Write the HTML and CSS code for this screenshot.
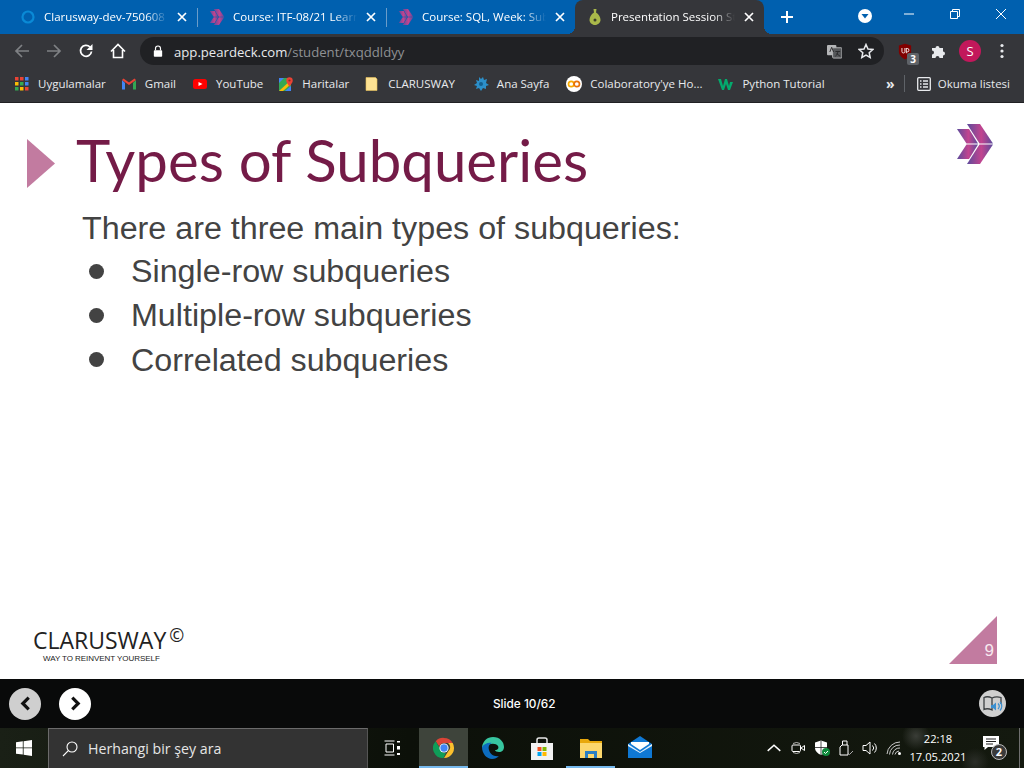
FILE: index.html
```html
<!DOCTYPE html>
<html lang="en">
<head>
    <meta charset="UTF-8">
    <title>Presentation Session Student</title>
    <link rel="stylesheet" href="styles.css">
</head>
<body>
    <svg class="defs" width="0" height="0">
        <defs>
            <linearGradient id="chev" x1="0" y1="0" x2="1" y2="0">
                <stop offset="0" stop-color="#5c4b9c"/>
                <stop offset="0.55" stop-color="#c2448f"/>
                <stop offset="1" stop-color="#5c4b9c"/>
            </linearGradient>
            <symbol id="chevrons" viewBox="0 0 36 40">
                <path d="M0 5h12l9 14.500H9.500z" fill="url(#chev)"/>
                <path d="M9.500 20.500H21L12 35H0z" fill="url(#chev)"/>
                <path d="M10 0h13l13 19.500H22.500z" fill="url(#chev)"/>
                <path d="M22.500 20.500H36L23 40H10z" fill="url(#chev)"/>
            </symbol>
            <symbol id="x" viewBox="0 0 10 10">
                <path d="M1 1l8 8M9 1l-8 8" stroke="#fff" stroke-width="1.700" fill="none"/>
            </symbol>
        </defs>
    </svg>

    <!-- tab strip -->
    <div class="tabstrip">
        <div class="tab">
            <svg class="fav" viewBox="0 0 16 16"><circle cx="8" cy="8" r="5.500" fill="none" stroke="#0a8ad6" stroke-width="2.200"/></svg>
            <span class="tab-title">Clarusway-dev-750608</span>
            <svg class="tab-x"><use href="#x"/></svg>
        </div>
        <div class="tab">
            <svg class="fav"><use href="#chevrons"/></svg>
            <span class="tab-title">Course: ITF-08/21 Learn</span>
            <svg class="tab-x"><use href="#x"/></svg>
        </div>
        <div class="tab">
            <svg class="fav"><use href="#chevrons"/></svg>
            <span class="tab-title">Course: SQL, Week: Sub</span>
            <svg class="tab-x"><use href="#x"/></svg>
        </div>
        <div class="tab active">
            <svg class="fav" viewBox="0 0 16 16">
                <path d="M6.500 0h3l-.5 3.500c3 1.500 4.500 5 4.500 7.500S11 16 8 16s-5.500-2.500-5.500-5S4 5 7 3.500z" fill="#a9b84a"/>
                <circle cx="8" cy="11" r="1.500" fill="#3c3f2a"/>
            </svg>
            <span class="tab-title">Presentation Session St</span>
            <svg class="tab-x"><use href="#x"/></svg>
        </div>
        <svg class="newtab" viewBox="0 0 12 12"><path d="M6 0v12M0 6h12" stroke="#fff" stroke-width="2"/></svg>
        <div class="strip-menu">
            <svg viewBox="0 0 14 14"><circle cx="7" cy="7" r="7" fill="#fff"/><path d="M3.500 5h7L7 9.500z" fill="#0060af"/></svg>
        </div>
        <div class="winbtns">
            <svg viewBox="0 0 12 12"><path d="M1 6h10" stroke="#fff" fill="none"/></svg>
            <svg viewBox="0 0 12 12"><path d="M1.500 3.500h7v7h-7zM3.500 3.500v-2h7v7h-2" stroke="#fff" fill="none"/></svg>
            <svg viewBox="0 0 12 12"><path d="M1 1l10 10M11 1L1 11" stroke="#fff" fill="none"/></svg>
        </div>
    </div>

    <!-- address bar -->
    <div class="toolbar">
        <svg class="tool" viewBox="0 0 16 16"><path d="M15 8H2M8 2L2 8l6 6" fill="none" stroke="#7f8184" stroke-width="1.700"/></svg>
        <svg class="tool" viewBox="0 0 16 16"><path d="M1 8h13M8 2l6 6-6 6" fill="none" stroke="#7f8184" stroke-width="1.700"/></svg>
        <svg class="tool" viewBox="0 0 16 16"><path d="M13.500 8.500A5.500 5.500 0 1 1 12 4" fill="none" stroke="#fff" stroke-width="1.800"/><path d="M14.500 1v6h-6z" fill="#fff"/></svg>
        <svg class="tool" viewBox="0 0 16 16"><path d="M1 8.500L8 1.500l7 7M3.500 7v7.500h9V7" fill="none" stroke="#fff" stroke-width="1.600"/></svg>
        <div class="omnibox">
            <svg class="lock" viewBox="0 0 12 14"><path d="M3 6V4a3 3 0 0 1 6 0v2" fill="none" stroke="#fff" stroke-width="1.400"/><rect x="1" y="6" width="10" height="8" rx="1" fill="#fff"/></svg>
            <span class="url">app.peardeck.com<span class="url-path">/student/txqddldyy</span></span>
            <svg class="omni-translate" viewBox="0 0 16 16"><rect x="0" y="1" width="10" height="11" rx="1" fill="#b5b6b8"/><rect x="6" y="4" width="10" height="11" rx="1" fill="#55575a" stroke="#b5b6b8"/><path d="M3 8.500l2-5 2 5M9 8h5M11.500 8c0 2-1 4-2.500 5M10.500 10c.8 1.300 2 2.400 3.500 3" fill="none" stroke="#27282a"/></svg>
            <svg class="omni-star" viewBox="0 0 16 16"><path d="M8 1.500l2 4.500 4.800.5-3.600 3.200 1 4.800L8 12.100l-4.200 2.400 1-4.800L1.200 6.500 6 6z" fill="none" stroke="#e8eaed" stroke-width="1.500"/></svg>
        </div>
        <div class="ext-ublock">
            <svg viewBox="0 0 16 18"><path d="M8 0l7 2v7c0 4-3 7-7 9-4-2-7-5-7-9V2z" fill="#800000"/><path d="M4.500 5v4a1.700 1.700 0 0 0 3.400 0V5M9.500 5v6M9.500 5.500h1a2 2 0 0 1 0 4h-1" fill="none" stroke="#f2e6e6" stroke-width="1.100"/></svg>
            <span class="ext-badge">3</span>
        </div>
        <svg class="ext-puzzle" viewBox="0 0 16 16"><path d="M1 5h3.500a2 2 0 1 1 4 0H12v3.500a2 2 0 1 1 0 4V15H8.500a2 2 0 1 0-4 0H1v-3.500a2 2 0 1 0 0-4z" fill="#e8eaed"/></svg>
        <div class="avatar">S</div>
        <svg class="dots" viewBox="0 0 4 16"><circle cx="2" cy="2.500" r="1.600" fill="#e8eaed"/><circle cx="2" cy="8" r="1.600" fill="#e8eaed"/><circle cx="2" cy="13.500" r="1.600" fill="#e8eaed"/></svg>
    </div>

    <!-- bookmarks -->
    <div class="bookmarks">
        <div class="bm bm-apps">
            <svg viewBox="0 0 14 14">
                <path d="M0 0h3.500v3.500H0z" fill="#ea4335"/><path d="M5 0h3.500v3.500H5z" fill="#ea4335"/><path d="M10 0h3.500v3.500H10z" fill="#4285f4"/>
                <path d="M0 5h3.500v3.500H0z" fill="#fbbc05"/><path d="M5 5h3.500v3.500H5z" fill="#34a853"/><path d="M10 5h3.500v3.500H10z" fill="#4285f4"/>
                <path d="M0 10h3.500v3.500H0z" fill="#34a853"/><path d="M5 10h3.500v3.500H5z" fill="#fbbc05"/><path d="M10 10h3.500v3.500H10z" fill="#ea4335"/>
            </svg>
            Uygulamalar
        </div>
        <div class="bm bm-gmail">
            <svg viewBox="0 0 14 12"><path d="M0 2v9.500h3V5z" fill="#4285f4"/><path d="M11 5v6.500h3V2z" fill="#34a853"/><path d="M0 2l7 5 7-5-1.500-1.500L7 4.500 1.500.5z" fill="#ea4335"/></svg>
            Gmail
        </div>
        <div class="bm bm-yt">
            <svg viewBox="0 0 14 10"><rect width="14" height="10" rx="2.500" fill="#f00"/><path d="M5.500 3l4 2-4 2z" fill="#fff"/></svg>
            YouTube
        </div>
        <div class="bm bm-maps">
            <svg viewBox="0 0 14 14"><path d="M0 1h12v13H0z" fill="#34a853"/><path d="M0 14L12 3v4L4 14z" fill="#fbbc05"/><path d="M0 1h5L0 6z" fill="#4285f4"/><path d="M6 14l6-5v5z" fill="#4285f4"/><circle cx="10.500" cy="3.500" r="3.200" fill="#ea4335"/><path d="M8 5.500h5L10.500 10z" fill="#ea4335"/><circle cx="10.500" cy="3.500" r="1.100" fill="#8f2a22"/></svg>
            Haritalar
        </div>
        <div class="bm bm-folder">
            <svg viewBox="0 0 12 14"><path d="M0 .500h9.500l1.500 1.500v11.500H0z" fill="#fde293" stroke="#e9c25b" stroke-width=".600"/></svg>
            CLARUSWAY
        </div>
        <div class="bm bm-ana wide-ic">
            <svg viewBox="0 0 16 16"><path d="M6 1l2 2 2-2 1 3 3-1-1 4 3 2-3 1v3l-3-1-2 3-2-3-3 1 1-3-3-1 3-2-1-3 3 1z" fill="#2c8fc9"/><circle cx="8" cy="8" r="2" fill="#145f8e"/></svg>
            Ana Sayfa
        </div>
        <div class="bm bm-colab wide-ic">
            <svg viewBox="0 0 16 16"><circle cx="8" cy="8" r="8" fill="#fff"/><circle cx="5.200" cy="8" r="2.700" fill="none" stroke="#f9ab00" stroke-width="1.700"/><circle cx="10.800" cy="8" r="2.700" fill="none" stroke="#e8710a" stroke-width="1.700"/></svg>
            Colaboratory'ye Ho...
        </div>
        <div class="bm bm-w3 wide-ic">
            <svg viewBox="0 0 16 12"><path d="M0 1h3l2 7 2-7h2l2 7 1-4h3l-3 8h-2L8 6l-2 6H4z" fill="#04aa6d"/></svg>
            Python Tutorial
        </div>
        <span class="bm-more">»</span>
        <span class="bm-sep"></span>
        <div class="bm bm-read">
            <svg viewBox="0 0 14 14"><rect x=".700" y=".700" width="12.600" height="12.600" rx="1" fill="none" stroke="#e8eaed" stroke-width="1.300"/><path d="M3 4h1.500M6 4h5M3 7h1.500M6 7h5M3 10h1.500M6 10h5" stroke="#e8eaed" stroke-width="1.300"/></svg>
            Okuma listesi
        </div>
    </div>

    <!-- slide -->
    <main class="slide">
        <header class="slide-head">
            <span class="head-mark"></span>
            <h1>Types of Subqueries</h1>
            <svg class="head-logo"><use href="#chevrons"/></svg>
        </header>
        <section class="slide-body">
            <p>There are three main types of subqueries:</p>
            <ul>
                <li>Single-row subqueries</li>
                <li>Multiple-row subqueries</li>
                <li>Correlated subqueries</li>
            </ul>
        </section>
        <footer class="slide-foot">
            <div class="brand">
                <div class="brand-name">CLARUSWAY<sup>©</sup></div>
                <div class="brand-tag">WAY TO REINVENT YOURSELF</div>
            </div>
            <div class="page-no"><span>9</span></div>
        </footer>
    </main>

    <!-- deck controls -->
    <div class="deckbar">
        <div class="deck-nav">
            <button class="nav-btn prev"><svg viewBox="0 0 10 14"><path d="M8 1.500L2.500 7 8 12.500" fill="none" stroke="#111" stroke-width="3"/></svg></button>
            <button class="nav-btn next"><svg viewBox="0 0 10 14"><path d="M2 1.500L7.500 7 2 12.500" fill="none" stroke="#111" stroke-width="3"/></svg></button>
        </div>
        <div class="deck-count">Slide 10/62</div>
        <div class="deck-read">
            <svg viewBox="0 0 20 18"><path d="M1 2.500c2-1 5-1 8 .5v12c-3-1.500-6-1.500-8-.5zM9 3c3-1.500 6-1.500 9-.5V9" fill="none" stroke="#3c4043" stroke-width="1.300"/><path d="M8 10h2l3-2.500v8L10 13H8z" fill="#3a8fd0"/><path d="M15 8.500a4 4 0 0 1 0 5.500M17 7a6 6 0 0 1 0 8.500" fill="none" stroke="#3a8fd0" stroke-width="1.200"/></svg>
        </div>
    </div>

    <!-- windows taskbar -->
    <div class="taskbar">
        <div class="start">
            <svg viewBox="0 0 16 16"><path d="M0 2.300l6.800-1v6.200H0zM7.600 1.200L16 0v7.500H7.600zM0 8.300h6.800v6.300L0 13.700zM7.600 8.300H16V16l-8.400-1.200z" fill="#fff"/></svg>
        </div>
        <div class="search">
            <svg viewBox="0 0 16 16"><circle cx="10" cy="6" r="5" fill="none" stroke="#fff" stroke-width="1.100"/><path d="M6.300 9.700L1 15" stroke="#fff" stroke-width="1.100"/></svg>
            <span>Herhangi bir şey ara</span>
        </div>
        <div class="task task-view">
            <svg viewBox="0 0 16 16"><path d="M.500 1h10M.500 15h10M2 4h7.500v8H2z" fill="none" stroke="#fff"/><path d="M13 1h3v1.500h-3zM13 6h3v3.500h-3zM13 13h3v2h-3z" fill="#fff"/></svg>
        </div>
        <div class="task task-open task-focus">
            <svg viewBox="0 0 24 24">
                <path d="M12 1a11 11 0 0 1 9.500 5.500H12a5.500 5.500 0 0 0-5.200 3.800L3 4.500A11 11 0 0 1 12 1z" fill="#db4437"/>
                <path d="M21.500 6.500A11 11 0 0 1 12 23l5-8a5.500 5.500 0 0 0-.6-8.500z" fill="#fbc02d"/>
                <path d="M3 4.500l4.700 8.200A5.500 5.500 0 0 0 14 17.200L11.500 23A11 11 0 0 1 3 4.500z" fill="#0f9d58"/>
                <circle cx="12" cy="12" r="5" fill="#fff"/><circle cx="12" cy="12" r="4" fill="#4285f4"/>
            </svg>
        </div>
        <div class="task">
            <svg viewBox="0 0 24 24">
                <path d="M1 11C2 5 6 1 12 1c7 0 11 5 11 10 0 3-2 5-5 5-2 0-4-1-4-2 3 0 4-2 3-4-2-3-8-3-11 0-2 1-4 2-5 1z" fill="#37c6a0"/>
                <path d="M1 11c2-3 6-5 10-4-3 1-4 4-3 7 1 4 5 7 10 6-2 2-4 3-7 3C6 23 1 18 1 11z" fill="#0c6cbf"/>
            </svg>
        </div>
        <div class="task">
            <svg viewBox="0 0 24 24"><path d="M7 7V4a2 2 0 0 1 2-2h6a2 2 0 0 1 2 2v3" fill="none" stroke="#e6e6e6" stroke-width="1.500"/><path d="M1 7h22v17H1z" fill="#f2f2f2"/><path d="M7.500 11h4v4h-4z" fill="#f25022"/><path d="M12.500 11h4v4h-4z" fill="#7fba00"/><path d="M7.500 16h4v4h-4z" fill="#00a4ef"/><path d="M12.500 16h4v4h-4z" fill="#ffb900"/></svg>
        </div>
        <div class="task task-open">
            <svg viewBox="0 0 24 24"><path d="M1 3h8l2 2h12v17H1z" fill="#e8a80c"/><path d="M1 7h22v15H1z" fill="#fcd76d"/><path d="M6 15h12v7h-3v-4H9v4H6z" fill="#2a7fc4"/></svg>
        </div>
        <div class="task">
            <svg viewBox="0 0 24 24"><path d="M0 8L12 0l12 8v14H0z" fill="#0f78d4"/><path d="M0 8l12 8 12-8v2l-12 7L0 10z" fill="#e4f1fb"/><path d="M3 6h18v2l-9 6-9-6z" fill="#fff"/></svg>
        </div>
        <div class="tray">
            <svg class="tray-ic" viewBox="0 0 14 14"><path d="M1.500 9.500L7 4.500l5.500 5" fill="none" stroke="#fff" stroke-width="1.300"/></svg>
            <svg class="tray-ic" viewBox="0 0 14 16"><path d="M2 3.500a7 7 0 0 1 7 0M2 12.500a7 7 0 0 0 7 0" fill="none" stroke="#ddd" stroke-width=".800"/><rect x="1" y="5" width="8.500" height="6.500" rx="1" fill="none" stroke="#fff"/><path d="M10 8l3.500-2.500v5z" fill="none" stroke="#fff"/></svg>
            <svg class="tray-ic" viewBox="0 0 16 16"><path d="M7 .500L1 2.500V8c0 3 2.500 5.500 6 7 3.500-1.500 6-4 6-7V2.500z" fill="#fff"/><path d="M7 .500V15M1 7.500h12" stroke="#222" stroke-width=".800"/><circle cx="12" cy="12" r="4" fill="#0f8a3c"/><path d="M10 12l1.500 1.500 2.500-2.500" fill="none" stroke="#fff"/></svg>
            <svg class="tray-ic" viewBox="0 0 14 16"><path d="M3 5h6v10H1V7z M3.500 5V1h4.500v4" fill="none" stroke="#fff"/><path d="M9 13l1.500 1.500L14 11" fill="none" stroke="#aaa"/></svg>
            <svg class="tray-ic" viewBox="0 0 16 16"><path d="M1 5.500h3L8 2v12l-4-3.500H1z" fill="none" stroke="#fff"/><path d="M10.500 5.500a3.500 3.500 0 0 1 0 5M12.500 3.500a6.500 6.500 0 0 1 0 9" fill="none" stroke="#fff"/></svg>
            <svg class="tray-ic" viewBox="0 0 16 16"><path d="M1 14A13 13 0 0 1 14 2M3.500 14.500A10 10 0 0 1 14 5M6.500 14.500A7 7 0 0 1 14 8M9 14.500a4.500 4.500 0 0 1 4-3.500" fill="none" stroke="#c9c9c9"/><circle cx="13.500" cy="13.500" r="1.500" fill="#fff"/></svg>
            <div class="clock"><div>22:18</div><div>17.05.2021</div></div>
            <div class="notif">
                <svg viewBox="0 0 16 14"><path d="M0 0h16v11H5L1.500 14v-3H0z" fill="#fff"/><path d="M3 3h10M3 5.500h10M3 8h7" stroke="#222"/></svg>
                <span class="notif-count">2</span>
            </div>
            <div class="show-desktop"></div>
        </div>
    </div>
</body>
</html>
```

FILE: styles.css
```css
* {
    box-sizing: border-box;
}

html, body {
    margin: 0;
    padding: 0;
}

body {
    width: 1024px;
    height: 768px;
    overflow: hidden;
    display: flex;
    flex-direction: column;
    font-family: 'Open Sans', 'Liberation Sans', sans-serif;
    background: #fff;
}

.defs {
    position: absolute;
}

/* tab strip */
.tabstrip {
    height: 34px;
    flex: none;
    display: flex;
    align-items: stretch;
    padding-left: 8px;
    background: #0060af;
}

.tab {
    width: 189px;
    flex: none;
    display: flex;
    align-items: center;
    padding-left: 12px;
    position: relative;
}

.tab::after {
    content: "";
    position: absolute;
    right: -1px;
    top: 8px;
    width: 1px;
    height: 19px;
    background: #6a9cc9;
}

.tab:nth-child(3)::after {
    display: none;
}

.tab .fav {
    width: 16px;
    height: 16px;
    flex: none;
}

.tab-title {
    width: 124px;
    margin-left: 8px;
    padding-bottom: 2px;
    flex: none;
    white-space: nowrap;
    font-size: 11.500px;
    color: #fff;
    -webkit-mask-image: linear-gradient(to right, #000 82%, transparent 100%);
    mask-image: linear-gradient(to right, #000 82%, transparent 100%);
}

.tab-x {
    width: 10px;
    height: 10px;
    margin-left: 9px;
    flex: none;
}

.tab.active {
    background: #35363a;
    border-radius: 8px 8px 0 0;
}

/* the little curves where the active tab meets the strip */
.tab.active::before,
.tab.active::after {
    content: "";
    position: absolute;
    top: auto;
    bottom: 0;
    width: 8px;
    height: 8px;
    background: radial-gradient(circle at 0 0, transparent 8px, #35363a 8px);
}

.tab.active::before {
    left: -8px;
}

.tab.active::after {
    right: -8px;
    background: radial-gradient(circle at 100% 0, transparent 8px, #35363a 8px);
}

.newtab {
    width: 12px;
    height: 12px;
    margin: 11px 0 0 17px;
}

.strip-menu {
    margin-left: 65px;
    padding-top: 9px;
}

.strip-menu svg {
    width: 14px;
    height: 14px;
    display: block;
}

.winbtns {
    margin-left: auto;
    display: flex;
    gap: 34px;
    padding: 8px 17px 0 0;
}

.winbtns svg {
    width: 12px;
    height: 12px;
}

/* address bar */
.toolbar {
    height: 34px;
    flex: none;
    display: flex;
    align-items: center;
    padding-left: 14px;
    background: #35363a;
}

.tool {
    width: 16px;
    height: 16px;
    margin-right: 16px;
    flex: none;
}

.omnibox {
    width: 744px;
    height: 28px;
    margin-left: -2px;
    flex: none;
    display: flex;
    align-items: center;
    padding-left: 13px;
    border-radius: 14px;
    background: #202124;
}

.lock {
    width: 10px;
    height: 12px;
    flex: none;
}

.url {
    margin: 1px 0 0 11px;
    font-size: 13.150px;
    color: #e8eaed;
}

.url-path {
    color: #8f9194;
}

.omni-translate {
    width: 15px;
    height: 15px;
    margin-left: auto;
}

.omni-star {
    width: 16px;
    height: 16px;
    margin: 0 10px 0 16px;
}

.ext-ublock {
    width: 14px;
    height: 17px;
    margin-left: 14px;
    position: relative;
}

.ext-ublock svg {
    width: 14px;
    height: 17px;
    display: block;
}

.ext-badge {
    position: absolute;
    left: 9px;
    top: 10px;
    width: 12px;
    height: 12px;
    border-radius: 2px;
    background: #5f6368;
    font-size: 10px;
    font-weight: 700;
    line-height: 12px;
    text-align: center;
    color: #fff;
}

.ext-puzzle {
    width: 16px;
    height: 16px;
    margin-left: 19px;
}

.avatar {
    width: 22px;
    height: 22px;
    margin-left: 12px;
    border-radius: 50%;
    background: #c2185b;
    font-size: 13px;
    line-height: 22px;
    text-align: center;
    color: #fff;
}

.dots {
    width: 4px;
    height: 16px;
    margin-left: 19px;
}

/* bookmarks */
.bookmarks {
    height: 35px;
    flex: none;
    display: flex;
    align-items: center;
    padding: 0 0 3px 15px;
    background: #35363a;
    border-bottom: 1px solid #202124;
    font-size: 11.500px;
    color: #e8eaed;
}

.bm {
    display: flex;
    align-items: center;
    gap: 9px;
    white-space: nowrap;
}

.bm svg {
    width: 14px;
    height: 14px;
    flex: none;
}

.bm.wide-ic {
    gap: 8px;
}

.bm.wide-ic svg {
    width: 16px;
    height: 16px;
}

.bm-gmail { margin-left: 16px; }
.bm-yt { margin-left: 17px; }
.bm-maps { margin-left: 16px; }
.bm-folder { margin-left: 16px; }
.bm-ana { margin-left: 18px; }
.bm-colab { margin-left: 17px; }
.bm-w3 { margin-left: 16px; }

.bm-more {
    margin-left: auto;
    font-size: 14px;
    font-weight: 700;
}

.bm-sep {
    width: 1px;
    height: 17px;
    margin: 0 12px 0 9px;
    background: #5f6368;
}

.bm-read {
    gap: 7px;
    padding-right: 14px;
}

/* slide */
.slide {
    flex: 1;
    min-height: 0;
    display: flex;
    flex-direction: column;
    background: #fff;
}

.slide-head {
    display: flex;
    align-items: flex-start;
    padding: 21px 31px 0 27px;
}

.head-mark {
    width: 28px;
    height: 49px;
    margin-top: 15px;
    flex: none;
    background: #c27ba0;
    clip-path: polygon(0 0, 100% 50%, 0 100%);
}

h1 {
    margin: 0 0 0 21px;
    font-family: Lato, 'Open Sans', sans-serif;
    font-size: 58.200px;
    font-weight: 400;
    line-height: 72px;
    color: #741b47;
}

.head-logo {
    width: 36px;
    height: 40px;
    margin-left: auto;
}

.slide-body {
    padding: 10px 0 0 82px;
    font-family: 'Liberation Sans', Arial, sans-serif;
    font-size: 32.250px;
    line-height: 44.400px;
    color: #434343;
}

.slide-body p {
    margin: 0;
}

.slide-body ul {
    margin: -1.500px 0 0;
    padding: 0;
    list-style: none;
}

.slide-body li {
    display: flex;
    align-items: center;
    gap: 27px;
    padding-left: 7px;
}

.slide-body li::before {
    content: "";
    width: 15px;
    height: 15px;
    border-radius: 50%;
    background: #434343;
}

.slide-foot {
    margin-top: auto;
    display: flex;
    align-items: flex-end;
    justify-content: space-between;
    padding: 0 27px 15px 33px;
}

.brand {
    color: #222;
}

.brand-name {
    font-family: 'Open Sans', sans-serif;
    font-size: 23px;
    line-height: 26px;
}

.brand-name sup {
    margin-left: 3px;
    font-size: 18px;
    line-height: 0;
    vertical-align: 7px;
}

.brand-tag {
    margin: 1px 0 0 10px;
    font-family: 'Liberation Sans', sans-serif;
    font-size: 8px;
    line-height: 10px;
    letter-spacing: -.05px;
}

.page-no {
    width: 48px;
    height: 48px;
    display: flex;
    align-items: flex-end;
    justify-content: flex-end;
    padding: 0 3px 3px 0;
    background: #c27ba0;
    clip-path: polygon(100% 0, 100% 100%, 0 100%);
    font-family: 'Liberation Sans', sans-serif;
    font-size: 17px;
    color: #f7e8ef;
}

/* deck controls */
.deckbar {
    height: 49px;
    flex: none;
    display: flex;
    align-items: center;
    padding: 0 18px 0 9px;
    background: #090a0a;
}

.deck-nav {
    display: flex;
    gap: 18px;
}

.nav-btn {
    width: 32px;
    height: 32px;
    padding: 0;
    border: 0;
    border-radius: 50%;
    display: flex;
    align-items: center;
    justify-content: center;
    background: #fff;
}

.nav-btn.prev {
    background: #cfcfcf;
}

.nav-btn svg {
    width: 11px;
    height: 15px;
}

.deck-count {
    margin-left: 402px;
    font-family: Inter, sans-serif;
    font-size: 11.800px;
    font-weight: 500;
    color: #fff;
}

.deck-read {
    width: 27px;
    height: 27px;
    margin-left: auto;
    border-radius: 50%;
    display: flex;
    align-items: center;
    justify-content: center;
    background: #cfcfcf;
}

.deck-read svg {
    width: 20px;
    height: 18px;
}

/* windows taskbar */
.taskbar {
    height: 40px;
    flex: none;
    display: flex;
    align-items: stretch;
    background: #10150e;
    background-image: radial-gradient(circle at 916px 8px, #3a3d37 0, transparent 14px),
        radial-gradient(circle at 975px 34px, #2b2e28 0, transparent 14px),
        linear-gradient(to right, #1a2016, #0c1009 40%, #14190f);
}

.start {
    width: 48px;
    flex: none;
    display: flex;
    align-items: center;
    justify-content: center;
}

.start svg {
    width: 16px;
    height: 16px;
}

.search {
    width: 320px;
    flex: none;
    display: flex;
    align-items: center;
    gap: 10px;
    padding-left: 13px;
    background: #333;
    border: 1px solid #6b6b6b;
    border-right-color: #555;
    border-bottom: 0;
    font-size: 14.200px;
    color: #e6e6e6;
}

.search svg {
    width: 16px;
    height: 16px;
}

.task {
    width: 49px;
    flex: none;
    display: flex;
    align-items: center;
    justify-content: center;
}

.task svg {
    width: 24px;
    height: 24px;
}

.task-view {
    width: 47px;
    margin-right: 4px;
}

.task-view svg {
    width: 16px;
    height: 16px;
}

.task-open {
    box-shadow: inset 0 -2px 0 #76b9ed;
}

.task-focus {
    background: #3e443b;
}

.task-focus svg {
    width: 22px;
    height: 22px;
}

.tray {
    margin-left: auto;
    display: flex;
    align-items: center;
    gap: 8px;
    color: #fff;
}

.tray-ic {
    width: 16px;
    height: 16px;
    flex: none;
}

.clock {
    width: 70px;
    margin-left: -7px;
    font-size: 11.200px;
    line-height: 18px;
    text-align: center;
}

.notif {
    width: 24px;
    height: 24px;
    margin: 0 4px 0 2px;
    position: relative;
}

.notif svg {
    width: 16px;
    height: 14px;
    display: block;
}

.notif-count {
    position: absolute;
    left: 8px;
    top: 8px;
    width: 16px;
    height: 16px;
    border-radius: 50%;
    border: 1px solid #bbb;
    background: #3a3a3a;
    font-size: 11px;
    font-weight: 700;
    line-height: 14px;
    text-align: center;
}

.show-desktop {
    width: 5px;
    align-self: stretch;
    border-left: 1px solid #6f6f6f;
}
```
